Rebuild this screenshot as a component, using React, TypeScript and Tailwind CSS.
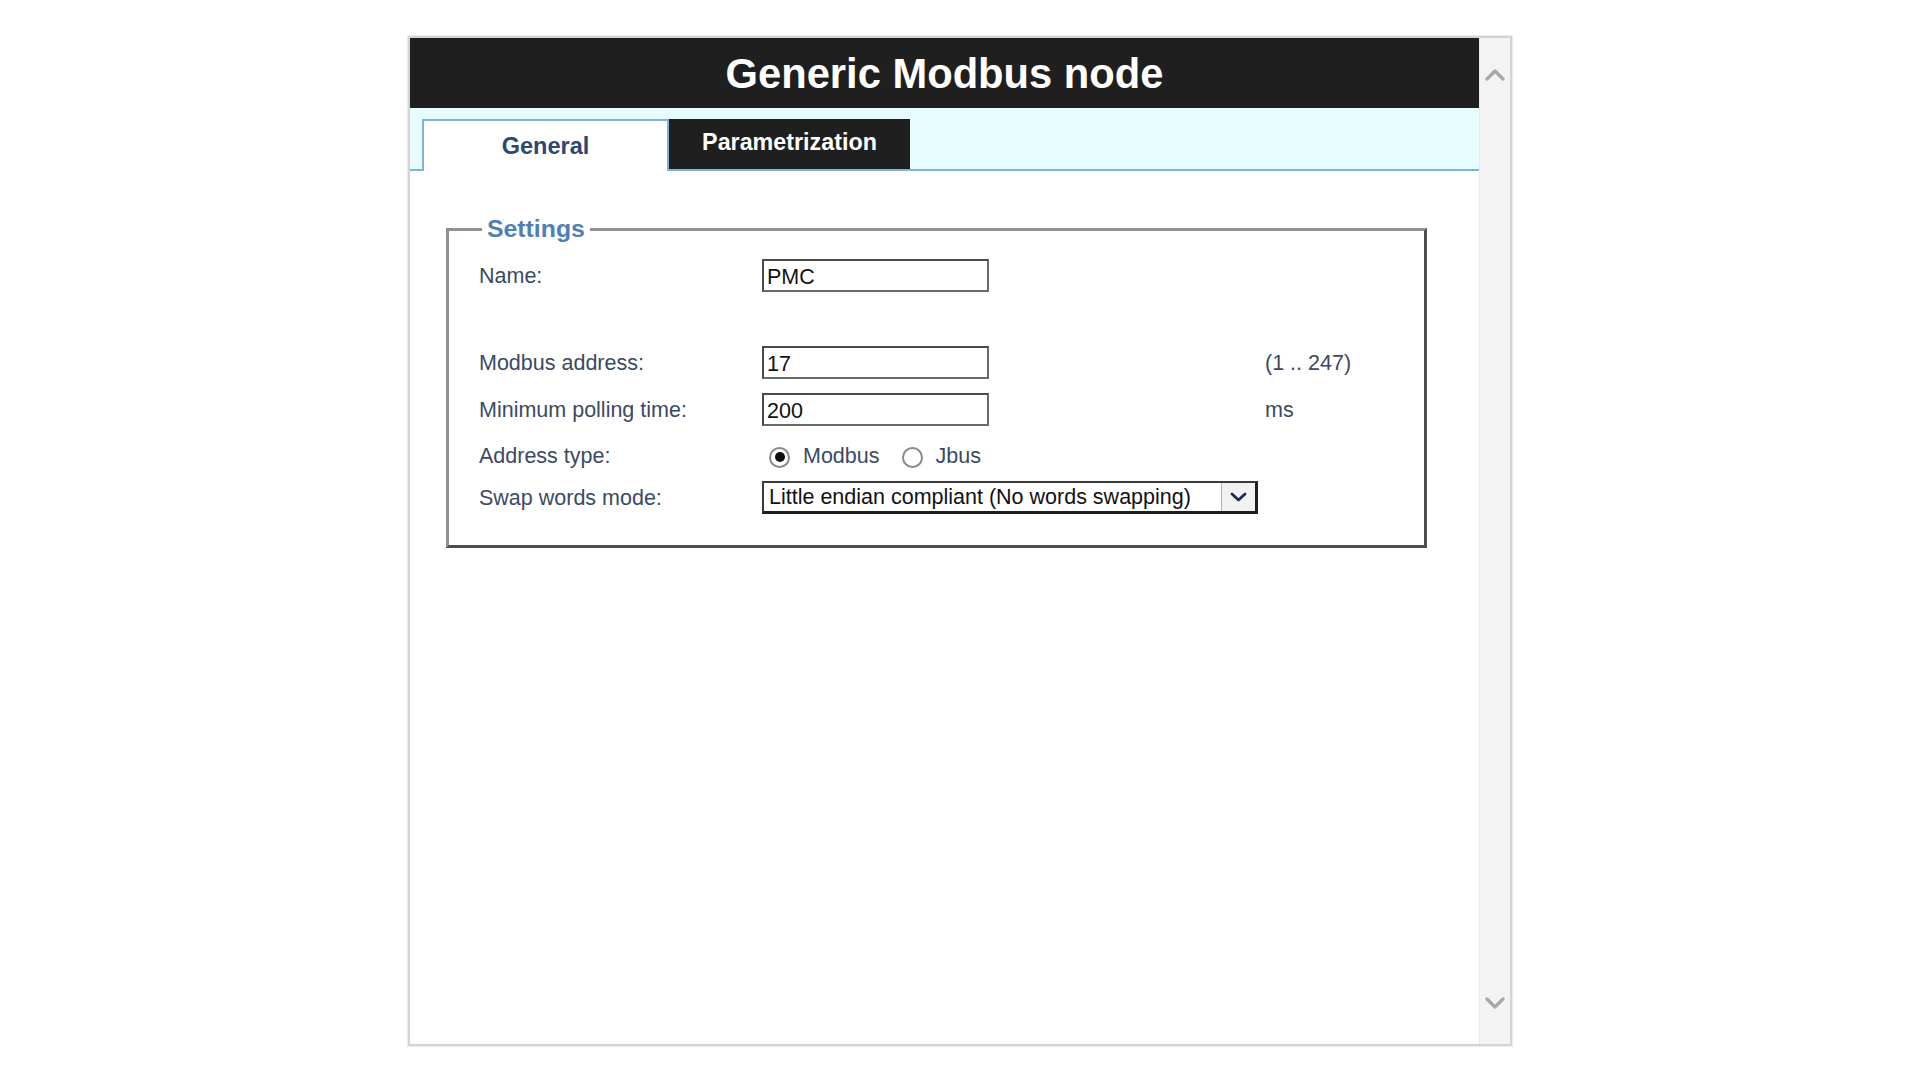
import React, { useState } from 'react';

const labelCls = "text-[21.5px] text-[#3b4a63] leading-none";
const inputCls =
  "w-[227px] h-[33px] border-2 border-t-[#4a4a4a] border-l-[#4a4a4a] border-r-[#6a6a6a] border-b-[#6a6a6a] bg-white pl-[3px] pt-[3px] text-[21.5px] text-[#111] outline-none font-['Liberation_Sans',Arial,sans-serif]";

function Radio({ checked, label, onClick }: { checked: boolean; label: string; onClick: () => void }) {
  return (
    <button type="button" onClick={onClick} className="flex items-center gap-[13px]">
      <span className="w-[21px] h-[21px] rounded-full border-2 border-[#8a8a8a] bg-white flex items-center justify-center">
        {checked && <span className="w-[10px] h-[10px] rounded-full bg-[#111]" />}
      </span>
      <span className={labelCls}>{label}</span>
    </button>
  );
}

function Chevron({ up }: { up?: boolean }) {
  return (
    <svg width="20" height="13" viewBox="0 0 20 13" fill="none">
      <path
        d={up ? "M2 11 L10 3 L18 11" : "M2 2 L10 10 L18 2"}
        stroke="#a8a8a8"
        strokeWidth="3.2"
        strokeLinecap="round"
        strokeLinejoin="round"
      />
    </svg>
  );
}

export default function App() {
  const [addrType, setAddrType] = useState<'modbus' | 'jbus'>('modbus');
  const [tab, setTab] = useState<'general' | 'param'>('general');

  return (
    <div className="w-full h-screen bg-white flex justify-center pt-[35px] font-['Liberation_Sans',Arial,sans-serif]">
      <div className="w-[1106px] h-[1012px] border border-[#ececec]">
        <div className="w-full h-full border-2 border-[#d4d4d4] flex">
          {/* main content */}
          <div className="flex-1 flex flex-col bg-white">
            <div className="h-[70px] bg-[#1f1f1f] flex items-center justify-center pt-[2px]">
              <h1 className="text-white font-bold text-[41.7px] leading-none">Generic Modbus node</h1>
            </div>

            {/* tabs */}
            <div className="h-[63px] bg-[#e6fcfe] border-b-2 border-[#80b2da] flex items-end pl-[12px]">
              <button
                type="button"
                onClick={() => setTab('general')}
                className="w-[247px] h-[52px] -mb-[2px] bg-white border-2 border-b-0 border-[#80b2da] text-[23.5px] font-bold text-[#2c4772] flex items-center justify-center pt-[2px]"
              >
                General
              </button>
              <button
                type="button"
                onClick={() => setTab('param')}
                className="w-[241px] h-[50px] bg-[#1f1f1f] text-white text-[23.3px] font-bold flex items-center justify-center pb-[3px]"
              >
                Parametrization
              </button>
            </div>

            {/* settings */}
            <fieldset className="mt-[44px] ml-[36px] mr-[52px] border-[3px] border-t-[#8e9297] border-l-[#8e9297] border-r-[#4e4e4e] border-b-[#4e4e4e] pl-[30px] pb-[31px]">
              <legend className="ml-[3px] px-[5px] text-[24.8px] font-bold text-[#4f7fb4] leading-[28px]">
                Settings
              </legend>

              <div className="grid grid-cols-[283px_503px_auto] items-center mt-[16px]">
                <span className={`${labelCls} pt-[3px]`}>Name:</span>
                <input className={inputCls} defaultValue="PMC" />
                <span />

                <span className={`${labelCls} mt-[54px] pt-[3px]`}>Modbus address:</span>
                <input className={`${inputCls} mt-[54px]`} defaultValue="17" />
                <span className={`${labelCls} mt-[54px] pt-[3px]`}>(1 .. 247)</span>

                <span className={`${labelCls} mt-[14px] pt-[3px]`}>Minimum polling time:</span>
                <input className={`${inputCls} mt-[14px]`} defaultValue="200" />
                <span className={`${labelCls} mt-[14px] pt-[3px]`}>ms</span>

                <span className={`${labelCls} mt-[14px] pt-[2px]`}>Address type:</span>
                <div className="mt-[14px] h-[32px] flex items-center gap-[22px] pl-[7px] pt-[2px]">
                  <Radio checked={addrType === 'modbus'} label="Modbus" onClick={() => setAddrType('modbus')} />
                  <Radio checked={addrType === 'jbus'} label="Jbus" onClick={() => setAddrType('jbus')} />
                </div>
                <span />

                <span className={`${labelCls} mt-[9px] pt-[2px]`}>Swap words mode:</span>
                <div className="mt-[9px] col-span-2 w-[496px] h-[33px] border-2 border-t-[#3a3a3a] border-l-[#3a3a3a] border-r-[3px] border-b-[3px] border-r-[#1e1e1e] border-b-[#1e1e1e] bg-white flex items-stretch">
                  <span className="flex-1 pl-[5px] pt-[2px] flex items-center text-[21.5px] text-[#111] leading-none">
                    Little endian compliant (No words swapping)
                  </span>
                  <span className="w-[34px] bg-[#f1f1f1] border-l border-[#b5b5b5] flex items-center justify-center">
                    <svg width="17" height="12" viewBox="0 0 17 12" fill="none">
                      <path d="M2 3 L8.5 9 L15 3" stroke="#1d2a4a" strokeWidth="2.8" strokeLinecap="round" strokeLinejoin="round" />
                    </svg>
                  </span>
                </div>
              </div>
            </fieldset>
          </div>

          {/* scrollbar */}
          <div className="w-[31px] bg-[#f3f3f3] border-l border-[#eaeaea] flex flex-col items-center justify-between pt-[30px] pb-[34px]">
            <Chevron up />
            <Chevron />
          </div>
        </div>
      </div>
    </div>
  );
}
